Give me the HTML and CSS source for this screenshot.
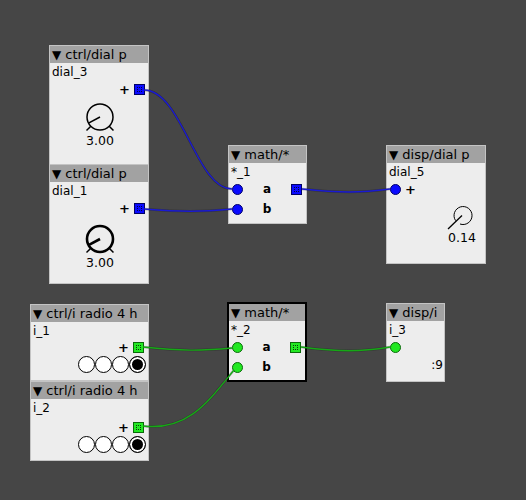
FILE: index.html
```html
<!DOCTYPE html>
<html>
<head>
<meta charset="utf-8">
<link rel="stylesheet" href="styles.css">
</head>
<body>
<div class="canvas">

  <div class="node n1">
    <div class="hdr"><span class="tri">▼</span> ctrl/dial p</div>
    <div class="lbl">dial_3</div>
    <div class="outrow"><span class="plus">+</span><span class="out blue"></span></div>
    <div class="knobwrap">
      <svg class="knob" width="36" height="32" viewBox="0 0 36 32">
        <circle cx="18" cy="15" r="13" fill="none" stroke="#000" stroke-width="1.5"/>
        <line x1="8.8" y1="24.2" x2="4.5" y2="28.5" stroke="#000" stroke-width="1.5"/>
        <line x1="27.2" y1="24.2" x2="31.5" y2="28.5" stroke="#000" stroke-width="1.5"/>
        <line x1="18" y1="15" x2="6.5" y2="21.2" stroke="#000" stroke-width="1.5"/>
      </svg>
      <div class="val">3.00</div>
    </div>
  </div>

  <div class="node n2">
    <div class="hdr"><span class="tri">▼</span> ctrl/dial p</div>
    <div class="lbl">dial_1</div>
    <div class="outrow"><span class="plus">+</span><span class="out blue"></span></div>
    <div class="knobwrap k2">
      <svg class="knob" width="36" height="32" viewBox="0 0 36 32">
        <circle cx="18" cy="15" r="13" fill="none" stroke="#000" stroke-width="2.6"/>
        <line x1="8.8" y1="24.2" x2="4.5" y2="28.5" stroke="#000" stroke-width="1.5"/>
        <line x1="27.2" y1="24.2" x2="31.5" y2="28.5" stroke="#000" stroke-width="1.5"/>
        <line x1="18" y1="15" x2="6.5" y2="21.2" stroke="#000" stroke-width="2.6"/>
      </svg>
      <div class="val">3.00</div>
    </div>
  </div>

  <div class="node m1">
    <div class="hdr"><span class="tri">▼</span> math/*</div>
    <div class="lbl">*_1</div>
    <div class="io"><span class="in blue"></span><span class="pname">a</span><span class="out blue"></span></div>
    <div class="io"><span class="in blue"></span><span class="pname">b</span><span class="spacer"></span></div>
  </div>

  <div class="node d5">
    <div class="hdr"><span class="tri">▼</span> disp/dial p</div>
    <div class="lbl">dial_5</div>
    <div class="inrow"><span class="in blue"></span><span class="plus">+</span></div>
    <div class="dispwrap">
      <svg width="36" height="28" viewBox="0 0 36 28">
        <path d="M 11.6 17.6 A 9 9 0 1 1 16 21" fill="none" stroke="#000" stroke-width="1"/>
        <line x1="18" y1="12.5" x2="4" y2="26" stroke="#000" stroke-width="1.3"/>
      </svg>
      <div class="val">0.14</div>
    </div>
  </div>

  <div class="node r1">
    <div class="hdr"><span class="tri">▼</span> ctrl/i radio 4 h</div>
    <div class="lbl">i_1</div>
    <div class="outrow r"><span class="plus">+</span><span class="out green"></span></div>
    <div class="radios"><span class="rb"></span><span class="rb"></span><span class="rb"></span><span class="rb on"></span></div>
  </div>

  <div class="node r2">
    <div class="hdr"><span class="tri">▼</span> ctrl/i radio 4 h</div>
    <div class="lbl">i_2</div>
    <div class="outrow r r2row"><span class="plus">+</span><span class="out green"></span></div>
    <div class="radios"><span class="rb"></span><span class="rb"></span><span class="rb"></span><span class="rb on"></span></div>
  </div>

  <div class="node m2">
    <div class="hdr"><span class="tri">▼</span> math/*</div>
    <div class="lbl">*_2</div>
    <div class="io"><span class="in green"></span><span class="pname">a</span><span class="out green"></span></div>
    <div class="io"><span class="in green"></span><span class="pname">b</span><span class="spacer"></span></div>
  </div>

  <div class="node i3">
    <div class="hdr"><span class="tri">▼</span> disp/i</div>
    <div class="lbl">i_3</div>
    <div class="inrow"><span class="in green"></span></div>
    <div class="ival">:9</div>
  </div>

  <svg class="wires" width="526" height="500" viewBox="0 0 526 500">
    <g fill="none" stroke="#000" stroke-width="2.4" stroke-opacity="0.25">
      <path d="M144 90 C 182 90, 196 189, 232 189"/>
      <path d="M144 209 C 182 212, 200 212, 232 209"/>
      <path d="M302 189 C 340 193, 360 193, 390 189"/>
      <path d="M143 347 C 182 351, 200 351, 232 348"/>
      <path d="M143 426 C 188 431, 208 402, 234 370"/>
      <path d="M301 347 C 340 352, 360 352, 390 347"/>
    </g>
    <g fill="none" stroke="#1a1ad2" stroke-width="1.4">
      <path d="M144 90 C 182 90, 196 189, 232 189"/>
      <path d="M144 209 C 182 212, 200 212, 232 209"/>
      <path d="M302 189 C 340 193, 360 193, 390 189"/>
    </g>
    <g fill="none" stroke="#16a816" stroke-width="1.4">
      <path d="M143 347 C 182 351, 200 351, 232 348"/>
      <path d="M143 426 C 188 431, 208 402, 234 370"/>
      <path d="M301 347 C 340 352, 360 352, 390 347"/>
    </g>
  </svg>

</div>
</body>
</html>
```

FILE: styles.css
```css
body {
  margin: 0;
  background: #464646;
  font-family: "DejaVu Sans", sans-serif;
  font-size: 12px;
  color: #000;
}

.canvas {
  position: relative;
  width: 526px;
  height: 500px;
  overflow: hidden;
}

.node {
  position: absolute;
  box-sizing: border-box;
  border: 1px solid #c4c4c4;
  background: #ededed;
}

.n1 { left: 49px; top: 45px; width: 100px; height: 121px; }
.n2 { left: 49px; top: 164px; width: 100px; height: 120px; }
.m1 { left: 228px; top: 145px; width: 79px; height: 79px; }
.d5 { left: 386px; top: 145px; width: 100px; height: 119px; }
.r1 { left: 30px; top: 304px; width: 119px; height: 77px; }
.r2 { left: 30px; top: 381px; width: 119px; height: 80px; }
.m2 { left: 227px; top: 302px; width: 80px; height: 80px; border: 2px solid #000; }
.i3 { left: 386px; top: 303px; width: 59px; height: 79px; }

.hdr {
  height: 17px;
  line-height: 17px;
  font-size: 13px;
  background: #a2a2a2;
  padding-left: 2px;
  white-space: nowrap;
  overflow: hidden;
}

.tri {
  font-size: 12px;
}

.lbl {
  padding: 2px 0 0 2px;
  height: 14px;
  line-height: 14px;
  white-space: nowrap;
}

.outrow {
  display: flex;
  justify-content: flex-end;
  align-items: center;
  height: 11px;
  margin-top: 5px;
  padding-right: 3px;
}

.outrow.r {
  margin-top: 4px;
  padding-right: 4px;
}

.outrow.r2row {
  margin-top: 7px;
}

.plus {
  font-size: 13px;
  font-weight: bold;
  line-height: 11px;
  margin-right: 4px;
}

.out {
  position: relative;
  box-sizing: border-box;
  width: 11px;
  height: 11px;
  border: 1px solid #000066;
}

.out::after {
  content: "";
  position: absolute;
  left: 2px;
  top: 2px;
  width: 3px;
  height: 3px;
  border: 1px dotted rgba(0, 0, 0, 0.75);
}

.out.blue { background: #0a0aff; }
.out.green { background: #22e822; border-color: #0a6a0a; }

.in {
  box-sizing: border-box;
  width: 11px;
  height: 11px;
  border-radius: 50%;
  margin-left: 3px;
  flex: none;
}

.in.blue { background: #0a0aff; border: 1px solid #00006a; }
.in.green { background: #22e822; border: 1px solid #0a6a0a; }

.knobwrap {
  width: 36px;
  margin-left: 32px;
  margin-top: 7px;
}

.knobwrap.k2 {
  margin-top: 10px;
}

.knob {
  display: block;
}

.val {
  text-align: center;
  line-height: 14px;
  font-size: 12.5px;
}

.io {
  display: flex;
  align-items: center;
  height: 20px;
  padding-right: 4px;
}

.pname {
  flex: 1;
  text-align: center;
  font-weight: bold;
}

.spacer {
  width: 11px;
}

.inrow {
  display: flex;
  align-items: center;
  height: 20px;
}

.inrow .plus {
  margin-left: 4px;
  margin-right: 0;
}

.dispwrap {
  width: 36px;
  margin-left: 57px;
  margin-top: 4px;
}

.dispwrap svg {
  display: block;
}

.ival {
  text-align: right;
  padding-right: 1px;
  line-height: 14px;
  margin-top: 1px;
}

.radios {
  display: flex;
  justify-content: flex-end;
  padding-right: 2px;
  margin-top: 3px;
}

.rb {
  box-sizing: border-box;
  width: 17px;
  height: 17px;
  border: 1px solid #000;
  border-radius: 50%;
  background: #fff;
}

.rb.on {
  background: #000;
  border-width: 1.5px;
  box-shadow: inset 0 0 0 2px #fff;
}

.wires {
  position: absolute;
  left: 0;
  top: 0;
  pointer-events: none;
}
```
